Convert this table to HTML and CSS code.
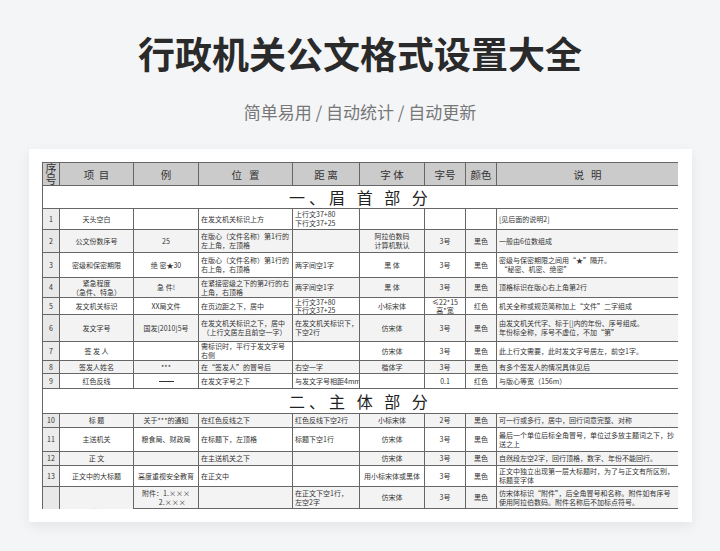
FILE: index.html
```html
<!DOCTYPE html>
<html lang="zh-CN">
<head>
<meta charset="utf-8">
<title>行政机关公文格式设置大全</title>
<link rel="stylesheet" href="styles.css">
</head>
<body>
<h1 class="title">行政机关公文格式设置大全</h1>
<p class="subtitle">简单易用 / 自动统计 / 自动更新</p>
<div class="card">
  <div class="clip">
    <table class="sheet">
      <colgroup>
        <col class="c-no"><col class="c-item"><col class="c-ex"><col class="c-pos"><col class="c-dist"><col class="c-font"><col class="c-size"><col class="c-color"><col class="c-note">
      </colgroup>
      <tr class="head">
        <th>序号</th><th>项&nbsp;&nbsp;目</th><th>例</th><th>位&nbsp;&nbsp;&nbsp;置</th><th>距 离</th><th>字 体</th><th>字号</th><th>颜色</th><th>说&nbsp;&nbsp;&nbsp;明</th>
      </tr>
      <tr class="sec h23"><td colspan="9">一、眉 首 部 分</td></tr>
      <tr class="h21">
        <td class="no">1</td><td class="c">天头空白</td><td class="c"></td><td>在发文机关标识上方</td><td>上行文37+80<br>下行文37+25</td><td class="c"></td><td class="c"></td><td class="c"></td><td>[见后面的说明2]</td>
      </tr>
      <tr class="alt h23">
        <td class="no">2</td><td class="c">公文份数序号</td><td class="c">25</td><td>在版心（文件名称）第1行的<br>左上角，左顶格</td><td></td><td class="c">阿拉伯数码<br>计算机默认</td><td class="c">3号</td><td class="c">黑色</td><td>一般由6位数组成</td>
      </tr>
      <tr class="h25">
        <td class="no">3</td><td class="c">密级和保密期限</td><td class="c">绝 密★30</td><td>在版心（文件名称）第1行的<br>右上角，右顶格</td><td>两字间空1字</td><td class="c">黑 体</td><td class="c">3号</td><td class="c">黑色</td><td>密级与保密期限之间用“★”隔开。<br>&nbsp;“秘密、机密、绝密”</td>
      </tr>
      <tr class="alt h20">
        <td class="no">4</td><td class="c">紧急程度<br>（急件、特急）</td><td class="c">急 件!</td><td>在紧接密级之下的第2行的右<br>上角，右顶格</td><td>两字间空1字</td><td class="c">黑 体</td><td class="c">3号</td><td class="c">黑色</td><td>顶格标识在版心右上角第2行</td>
      </tr>
      <tr class="h17 tight">
        <td class="no">5</td><td class="c">发文机关标识</td><td class="c">XX局文件</td><td>在页边距之下，居中</td><td>上行文37+80<br>下行文37+25</td><td class="c">小标宋体</td><td class="c">≤22*15<br>高*宽</td><td class="c">红色</td><td>机关全称或规范简称加上“文件”二字组成</td>
      </tr>
      <tr class="alt h27">
        <td class="no">6</td><td class="c">发文字号</td><td class="c">国发[2010]5号</td><td>在发文机关标识之下，居中<br>&nbsp;（上行文居左且前空一字）</td><td>在发文机关标识下，<br>下空2行</td><td class="c">仿宋体</td><td class="c">3号</td><td class="c">黑色</td><td>由发文机关代字、标于[]内的年份、序号组成。<br>年份标全称，序号不虚位，不加“第”</td>
      </tr>
      <tr class="h19">
        <td class="no">7</td><td class="c">签 发 人</td><td class="c"></td><td>需标识时，平行于发文字号<br>右侧</td><td></td><td class="c">仿宋体</td><td class="c">3号</td><td class="c">黑色</td><td>此上行文需要，此时发文字号居左，前空1字。</td>
      </tr>
      <tr class="alt h13">
        <td class="no">8</td><td class="c">签发人姓名</td><td class="c">***</td><td>在“签发人”的冒号后</td><td>右空一字</td><td class="c">楷体字</td><td class="c">3号</td><td class="c">黑色</td><td>有多个签发人的情况具体见后</td>
      </tr>
      <tr class="h15">
        <td class="no">9</td><td class="c">红色反线</td><td class="c"><span class="rule"></span></td><td>在发文字号之下</td><td>与发文字号相距4mm</td><td class="c"></td><td class="c">0.1</td><td class="c">红色</td><td>与版心等宽（156m）</td>
      </tr>
      <tr class="sec h25"><td colspan="9">二、主 体 部 分</td></tr>
      <tr class="alt h14">
        <td class="no">10</td><td class="c">标 题</td><td class="c">关于***的通知</td><td>在红色反线之下</td><td>红色反线下空2行</td><td class="c">小标宋体</td><td class="c">2号</td><td class="c">黑色</td><td>可一行或多行，居中，回行词意完整、对称</td>
      </tr>
      <tr class="h24">
        <td class="no">11</td><td class="c">主送机关</td><td class="c">粮食局、财政局</td><td>在标题下，左顶格</td><td>标题下空1行</td><td class="c">仿宋体</td><td class="c">3号</td><td class="c">黑色</td><td>最后一个单位后标全角冒号，单位过多放主题词之下，抄<br>送之上</td>
      </tr>
      <tr class="alt h14">
        <td class="no">12</td><td class="c">正 文</td><td class="c"></td><td>在主送机关之下</td><td></td><td class="c">仿宋体</td><td class="c">3号</td><td class="c">黑色</td><td>自然段左空2字，回行顶格，数字、年份不能回行。</td>
      </tr>
      <tr class="h21">
        <td class="no">13</td><td class="c">正文中的大标题</td><td class="c">高度重视安全教育</td><td>在正文中</td><td></td><td class="c">用小标宋体或黑体</td><td class="c">3号</td><td class="c">黑色</td><td>正文中独立出现第一层大标题时，为了与正文有所区别，<br>标题变字体</td>
      </tr>
      <tr class="alt h22">
        <td class="no" rowspan="2">14</td><td class="c" rowspan="2">附 注</td><td class="c">附件：1.×××<br>&nbsp;&nbsp;&nbsp;&nbsp;&nbsp;&nbsp;&nbsp;&nbsp;2.×××</td><td></td><td>在正文下空1行，<br>左空2字</td><td class="c">仿宋体</td><td class="c">3号</td><td class="c">黑色</td><td>仿宋体标识“附件”，后全角冒号和名称。附件如有序号<br>使用阿拉伯数码。附件名称后不加标点符号。</td>
      </tr>
      <tr class="alt h30">
        <td class="c"></td><td></td><td></td><td class="c"></td><td class="c"></td><td class="c"></td><td></td>
      </tr>
    </table>
  </div>
</div>
</body>
</html>
```

FILE: styles.css
```css
html, body {
  margin: 0;
  padding: 0;
}
body {
  background: #f4f5f7;
  font-family: "Noto Sans CJK SC", "Noto Sans", sans-serif;
  color: #333;
  padding-top: 31px;
  width: 720px;
  height: 551px;
  overflow: hidden;
  box-sizing: border-box;
}
.title {
  margin: 0;
  text-align: center;
  font-size: 37px;
  line-height: 44px;
  font-weight: 700;
  color: #2a2a2a;
}
.subtitle {
  margin: 25px 0 0;
  text-align: center;
  font-size: 17px;
  line-height: 24px;
  color: #777;
}
.card {
  margin: 25px 0 0 29px;
  width: 663px;
  height: 373px;
  box-sizing: border-box;
  background: #fff;
  padding: 13px 14px 0 13px;
  box-shadow: 0 4px 12px rgba(0, 0, 0, 0.07);
}
.clip {
  height: 347px;
  overflow: hidden;
}
.sheet {
  width: 636px;
  table-layout: fixed;
  border-collapse: collapse;
  border: 1.5px solid #555;
  font-size: 7px;
  line-height: 9px;
  color: #333;
}
.c-no { width: 17px; }
.c-item { width: 74px; }
.c-ex { width: 65px; }
.c-pos { width: 94px; }
.c-dist { width: 67px; }
.c-font { width: 65px; }
.c-size { width: 41px; }
.c-color { width: 31px; }
.c-note { width: 182px; }
.sheet th, .sheet td {
  border: 1px solid #666;
  padding: 0 2px;
  vertical-align: middle;
  overflow: hidden;
  white-space: nowrap;
}
.sheet th {
  background: #cbcbcb;
  font-weight: 400;
  font-size: 10.5px;
  line-height: 11px;
  height: 22px;
  padding: 0;
  text-align: center;
  color: #333;
}
.sheet th:first-child {
  white-space: normal;
  font-size: 11px;
  line-height: 11px;
}
.sheet td.c { text-align: center; }
.sheet td.no {
  text-align: center;
  background: #ececec;
}
.sheet tr.alt td { background: #f3f3f3; }
.sheet tr.alt td.no { background: #e8e8e8; }
.sheet tr.sec td {
  background: #fff;
  text-align: center;
  font-size: 16px;
  line-height: 18px;
  letter-spacing: 4px;
  color: #222;
}
.tight td { line-height: 8px; }
.rule {
  display: inline-block;
  width: 15px;
  height: 1.5px;
  background: #333;
  vertical-align: middle;
}
.h13 td { height: 12px; }
.h14 td { height: 13px; }
.h15 td { height: 14px; }
.h17 td { height: 16px; }
.h19 td { height: 18px; }
.h20 td { height: 19px; }
.h21 td { height: 20px; }
.h22 td { height: 21px; }
.h23 td { height: 22px; }
.h24 td { height: 23px; }
.h25 td { height: 24px; }
.h27 td { height: 26px; }
.h30 td { height: 29px; }
```
